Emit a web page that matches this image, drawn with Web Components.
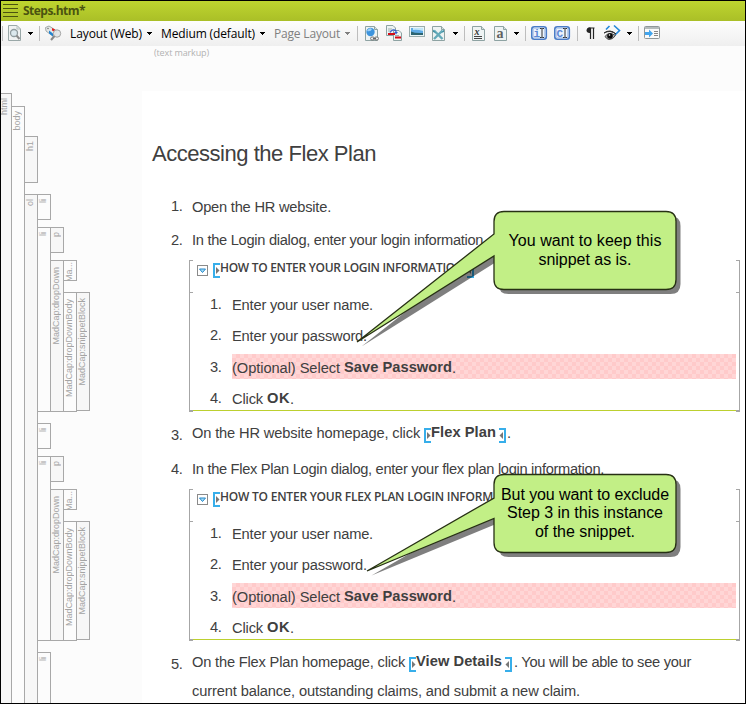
<!DOCTYPE html>
<html lang="en"><head><meta charset="utf-8"><title>Steps.htm</title>
<style>body{margin:0;width:746px;height:704px;overflow:hidden;font-family:"Liberation Sans",Arial,sans-serif;color:#404040}</style></head>
<body>
<editor-window>
  <title-bar slot="title"><fit-text w="62">Steps.htm*</fit-text></title-bar>
  <tool-bar slot="tools">
    <tb-sep style="--g:1px"></tb-sep>
    <tb-icon name="preview" w="14" style="--g:5px"></tb-icon><tb-caret style="--g:6px"></tb-caret>
    <tb-sep style="--g:6px"></tb-sep>
    <tb-icon name="tags" w="17" style="--g:5px"></tb-icon>
    <fit-text w="72" style="margin-left:8px">Layout (Web)</fit-text><tb-caret style="--g:5px"></tb-caret>
    <fit-text w="94" style="margin-left:9px">Medium (default)</fit-text><tb-caret style="--g:5px"></tb-caret>
    <fit-text w="66" style="margin-left:9px;color:#808080">Page Layout</fit-text><tb-caret style="--g:5px;color:#808080"></tb-caret>
    <tb-sep style="--g:7px"></tb-sep>
    <tb-icon name="link" w="15" style="--g:7px"></tb-icon>
    <tb-icon name="xref" w="17" style="--g:6px"></tb-icon>
    <tb-icon name="image" w="17" style="--g:6px"></tb-icon>
    <tb-icon name="media" w="15" style="--g:6px"></tb-icon><tb-caret style="--g:6px"></tb-caret>
    <tb-sep style="--g:6px"></tb-sep>
    <tb-icon name="varx" w="14" style="--g:7px"></tb-icon>
    <tb-icon name="vara" w="14" style="--g:8px"></tb-icon><tb-caret style="--g:6px"></tb-caret>
    <tb-sep style="--g:6px"></tb-sep>
    <tb-icon name="ii" w="17" style="--g:5px"></tb-icon>
    <tb-icon name="ci" w="17" style="--g:6px"></tb-icon>
    <tb-sep style="--g:6px"></tb-sep>
    <tb-icon name="para" w="10" style="--g:8px"></tb-icon>
    <tb-icon name="eye" w="18" style="--g:8px"></tb-icon><tb-caret style="--g:5px"></tb-caret>
    <tb-sep style="--g:6px"></tb-sep>
    <tb-icon name="panel" w="17" style="--g:5px"></tb-icon>
  </tool-bar>

  <md-tag slot="tags" label="html" h="620" style="--t:47px;margin-left:-3px">
    <md-tag label="body" h="610" style="--t:13px" alt>
      <md-tag label="h1" h="47" style="--t:30px"></md-tag>
      <md-tag label="ol" h="530" style="--t:11px">
        <md-tag label="li" h="26" alt></md-tag>
        <md-tag label="li" h="185" style="--t:7px" alt>
          <md-tag label="p" h="26"></md-tag>
          <md-tag label="MadCap:dropDown" h="152" style="--t:7px;--p:6px">
            <md-tag label="Ma..." h="21" style="--t:0px;--p:1px" alt></md-tag>
            <md-tag label="MadCap:dropDownBody" h="120" style="--t:11px;--p:6px" alt><md-tag label="MadCap:snippetBlock" h="119" style="--t:0px;--p:5px"></md-tag></md-tag>
          </md-tag>
        </md-tag>
        <md-tag label="li" h="26" style="--t:11px" alt></md-tag>
        <md-tag label="li" h="185" style="--t:7px" alt>
          <md-tag label="p" h="26"></md-tag>
          <md-tag label="MadCap:dropDown" h="152" style="--t:7px;--p:6px">
            <md-tag label="Ma..." h="21" style="--t:0px;--p:1px" alt></md-tag>
            <md-tag label="MadCap:dropDownBody" h="120" style="--t:11px;--p:6px" alt><md-tag label="MadCap:snippetBlock" h="119" style="--t:0px;--p:5px"></md-tag></md-tag>
          </md-tag>
        </md-tag>
        <md-tag label="li" h="90" style="--t:11px" alt></md-tag>
      </md-tag>
    </md-tag>
  </md-tag>

  <fit-text slot="markup" w="55">(text markup)</fit-text>
  <topic-page slot="page">
    <fit-text slot="heading" w="224">Accessing the Flex Plan</fit-text>
    <topic-step num="1." style="--t:28px;--n:-1px"><fit-text w="139">Open the HR website.</fit-text></topic-step>
    <topic-step num="2." style="--t:13px"><fit-text w="295">In the Login dialog, enter your login information.</fit-text></topic-step>
    <drop-down><fit-text slot="head" w="244">HOW TO ENTER YOUR LOGIN INFORMATION</fit-text></drop-down>
    <topic-step num="3." style="--t:11px;--n:2px"><fit-text w="232">On the HR website homepage, click </fit-text><snip-mark></snip-mark><fit-text w="65" class="b">Flex Plan</fit-text><snip-mark end></snip-mark><fit-text w="4" style="margin-left:1px">.</fit-text></topic-step>
    <topic-step num="4." style="--t:16px"><fit-text w="412">In the Flex Plan Login dialog, enter your flex plan login information.</fit-text></topic-step>
    <drop-down short><fit-text slot="head" w="273">HOW TO ENTER YOUR FLEX PLAN LOGIN INFORM</fit-text></drop-down>
    <topic-step num="5." style="--t:11px;--n:2px"><fit-text w="217">On the Flex Plan homepage, click </fit-text><snip-mark></snip-mark><fit-text w="86" class="b">View Details</fit-text><snip-mark end></snip-mark><fit-text w="177" style="margin-left:2px">. You will be able to see your</fit-text></topic-step>
    <topic-step num="" style="--t:9px"><fit-text w="388">current balance, outstanding claims, and submit a new claim.</fit-text></topic-step>
  </topic-page>

  <call-out slot="over" top="211" jy1="23" jy2="45" tx="-137" ty="131"><fit-text w="153">You want to keep this</fit-text><fit-text w="93">snippet as is.</fit-text></call-out>
  <call-out slot="over" top="474" jy1="24" jy2="44.500" tx="-127" ty="97"><fit-text w="168">But you want to exclude</fit-text><fit-text w="156">Step 3 in this instance</fit-text><fit-text w="100">of the snippet.</fit-text></call-out>
</editor-window>

<script>
const def = (name, html, init) => customElements.define(name, class extends HTMLElement {
  connectedCallback() {
    if (this.shadowRoot) return;
    this.attachShadow({mode: 'open'}).innerHTML = typeof html === 'function' ? html(this) : html;
    if (init) init(this);
  }
});
const at = (e, n) => e.getAttribute(n) || '';

def('editor-window', `<style>
:host{display:grid;grid-template-rows:20px 25px 1fr;box-sizing:border-box;width:746px;height:704px;border:1px solid #000;background:#fcfcfc;overflow:hidden;position:relative}
.main{display:grid;grid-template-columns:141px 1fr;overflow:hidden;min-height:0}
.tags{overflow:hidden;min-height:0}
.col{display:flex;flex-direction:column;min-height:0;overflow:hidden}
.mk{height:45px;padding-left:12px;flex:none;font:9px/14px "Open Sans",sans-serif;color:#b2b2b2}
.page{flex:1;background:#fff;min-height:0;overflow:hidden}
</style><slot name="title"></slot><slot name="tools"></slot>
<div class="main"><div class="tags"><slot name="tags"></slot></div><div class="col"><div class="mk"><slot name="markup"></slot></div><div class="page"><slot name="page"></slot></div></div></div><slot name="over"></slot>`);

def('title-bar', `<style>:host{display:flex;align-items:center;background:linear-gradient(#bed52f,#aabf27);font:bold 12px/20px "Open Sans",sans-serif;color:#4a5310}
svg{margin:0 5px 0 2px}</style><svg width="15" height="20"><path d="M0 3.500H15M0 7.500H15M0 11.500H15M0 15.500H15" stroke="#4a5310"/></svg><slot></slot>`);

def('tool-bar', `<style>:host{display:flex;align-items:center;background:linear-gradient(#fdfdfd,#efefef);font:12px/24px "Open Sans",sans-serif;color:#000}</style><slot></slot>`);
def('tb-sep', `<style>:host{display:block;flex:none;width:1px;height:15px;background:#bdbdbd;margin-left:var(--g)}</style>`);
def('tb-caret', `<style>:host{display:block;flex:none;height:25px;margin-left:var(--g)}</style><svg width="5" height="25" shape-rendering="crispEdges"><path d="M0 11H5V12H4V13H3V14H2V13H1V12H0Z" fill="currentColor"/></svg>`);

const doc = '<path d="M.5 1.500H9.500L12.500 4.500V15.500H.5Z" fill="#eef3f3" stroke="#8ea3a3"/><path d="M9.500 1.500V4.500H12.500" fill="#d5dfdf" stroke="#8ea3a3"/>';
const box = t => `<rect x=".8" y="1.800" width="14.500" height="12.500" rx="2.500" fill="#fff" stroke="#4a7cc7" stroke-width="1.600"/><rect x="2.500" y="3.500" width="11" height="9" fill="#edf4fc" stroke="#b9d0f0"/><text x="2.600" y="12" font-family="Liberation Mono" font-weight="bold" font-size="11" fill="#5c88d4">${t}</text><path d="M9 3.500H10.500L11 4L11.500 3.500H13M11 4V12M9 12.500H10.500L11 12L11.500 12.500H13" fill="none" stroke="#333"/>`;
const icons = {
  preview: '<path d="M.5 .5H9L12.500 4V15.500H.5Z" fill="#f0f2f2" stroke="#9aa8a8"/><path d="M9 .5V4H12.500" fill="none" stroke="#b5c0c0"/><circle cx="6" cy="8" r="3.500" fill="#dce9ee" stroke="#909c9f" stroke-width="1.300"/><path d="M8.500 10.500L11.500 14" stroke="#8b8b8b" stroke-width="2"/>',
  tags: '<path d="M.5 2.500L4 1L12 6L9 12L1 6Z" fill="#e4e8e8" stroke="#a2a9a9"/><circle cx="3" cy="3.500" r=".8" fill="#777"/><path d="M4 5.500L8 8.500V11.500L4 8.500Z" fill="#2583cf"/><path d="M7 3L10 4.500V7L7 5.500Z" fill="#e62020"/><circle cx="12" cy="8.500" r="3.700" fill="#e1e6e8" fill-opacity=".9" stroke="#a2a2a2"/><path d="M9.500 11L6 15" stroke="#898989" stroke-width="2"/>',
  link: doc + '<circle cx="5.500" cy="7" r="4.200" fill="#3d94dd"/><path d="M2 6Q4 2 7 4Q6 7 2 6Z" fill="#9fd0f6"/><g fill="#eee" stroke="#777"><rect x="5.500" y="12" width="4" height="3" rx="1.500"/><rect x="9.500" y="12" width="4" height="3" rx="1.500"/></g><path d="M8 13.500H11" stroke="#666"/>',
  xref: '<path d="M.5 .5H7L9.500 3V10.500H.5Z" fill="#edf3f3" stroke="#8ea3a3"/><path d="M7.500 5.500H13L15.500 8V15.500H7.500Z" fill="#edf3f3" stroke="#8ea3a3"/><path d="M2 4H6M2 6H5M9 10.500H13" stroke="#9daeae"/><path d="M4 7.500Q7 3 10 6V8" fill="none" stroke="#355dcb" stroke-width="1.200"/><path d="M8 7H12L10 9.500Z" fill="#355dcb"/><path d="M2 9H9M9 12.500H15" stroke="#d40d18" stroke-width="2"/>',
  image: '<rect x=".5" y="1.500" width="15" height="10" fill="#eaf5f7" stroke="#9aacac"/><rect x="2" y="3" width="12" height="7" fill="#5eaae5"/><path d="M4 3H14V6Q8 4 4 5Z" fill="#c1e6f9"/><path d="M2 6.500Q6 8.500 14 8V10H2Z" fill="#2c6471"/>',
  media: doc + '<path d="M2 5.500L10.500 14M10.500 5.500L2 14" stroke="#65aab9" stroke-width="2.400"/><path d="M1 4.500V7L4 8ZM12 4.500V7L9 8Z" fill="#3e90a5"/>',
  varx: doc + '<text x="2.500" y="9.500" font-family="Liberation Serif" font-weight="bold" font-style="italic" font-size="10" fill="#333">x</text><path d="M2 11.500H10M2 13.500H10" stroke="#444"/>',
  vara: doc + '<text x="2.500" y="13" font-family="Liberation Serif" font-weight="bold" font-size="14" fill="#606060">a</text>',
  ii: box('i'), ci: box('C'),
  para: '<path d="M7.500 3V14M4.500 3V14M2.500 3H8.500" stroke="#252525" fill="none" stroke-width="1.200"/><path d="M4.500 2.500H3.500Q.6 2.700 .6 5.300T3.500 8H4.500Z" fill="#252525"/>',
  eye: '<path d="M5.500 1L2 4.500M10 .5L15.500 5.500L11 10" fill="none" stroke="#2487d9" stroke-width="1.600"/><path d="M0 8Q6 3.500 12 9Q6 4.500 0 8Z" stroke="#333"/><path d="M1 11.500Q5 6 11.500 10.500Q9 14.500 5 14.500Q2.500 14 1 11.500Z" fill="#aaa" stroke="#4b4b4b"/><circle cx="6" cy="11" r="2.800" fill="#080808"/><circle cx="5.500" cy="10" r=".8" fill="#fff"/>',
  panel: '<rect x=".5" y="1.500" width="15" height="12" rx="1" fill="#fafafa" stroke="#8f9799"/><path d="M1 3H15" stroke="#b5bbbc" stroke-width="2"/><path d="M10 6.500H14M10 8.500H14M10 10.500H14" stroke="#888"/><path d="M1 7H5V4.500L9 8.500L5 12.500V10H1Z" fill="#42a5ed"/>'
};
def('tb-icon', e => `<style>:host{display:block;flex:none;height:17px;margin-left:var(--g)}svg{display:block;overflow:visible}</style><svg width="${at(e,'w')}" height="17">${icons[at(e,'name')]}</svg>`);

def('md-tag', e => `<style>:host{display:flex;margin-left:-1px;margin-top:var(--t,0px)}
.s{box-sizing:border-box;flex:none;width:14px;height:${at(e,'h')}px;border:1px solid #a8a8a8;background:${e.hasAttribute('alt')?'#fcfcfc':'#f7f7f7'};padding-top:var(--p,4px);overflow:hidden}
span{display:block;writing-mode:vertical-rl;transform:rotate(180deg);font-size:9px;line-height:10px;color:#a4a4a4;white-space:nowrap;width:10px;height:max-content}
.k{display:flex;flex-direction:column}
::slotted(md-tag:not([style])){--t:0px;--p:4px}
::slotted(md-tag){flex:none}
</style><div class="s"><span>${at(e,'label')}</span></div><div class="k"><slot></slot></div>`);

def('topic-page', `<style>:host{display:block;padding-top:48px;font-size:14.670px}.h{height:30px;padding-left:10px;font-size:22px;line-height:30px}</style><div class="h"><slot name="heading"></slot></div><slot></slot>`);
def('topic-step', e => `<style>:host{display:grid;grid-template-columns:21px 1fr;height:20px;margin-top:var(--t);padding-left:29px;line-height:20px;white-space:nowrap}
.n{padding-top:3px;margin-top:calc(var(--n,0px) - 3px);letter-spacing:-.4px}.c{display:flex}
::slotted(.b){font-weight:bold;margin-top:-1px}</style><div class="n">${at(e,'num')}</div><div class="c"><slot></slot></div>`);
def('snip-mark', e => `<style>:host{display:block;width:7px;height:15px;margin-top:5px;${e.hasAttribute('end')?'margin-left:3px':''}}svg{display:block${e.hasAttribute('end')?';transform:scaleX(-1)':''}}</style><svg width="7" height="15"><path d="M7 1H1V14H7" fill="none" stroke="#37aeea" stroke-width="2"/><path d="M3 4L6.500 7.500L3 11Z" fill="#777"/></svg>`);
def('inner-step', e => `<style>:host{display:grid;grid-template-columns:22px 504px;height:25px;margin-bottom:6px;line-height:20px;white-space:nowrap}
.n{padding-top:calc(2px + var(--d,0px));letter-spacing:-.4px}.c{display:flex;padding-top:calc(3px + var(--d,0px));box-sizing:border-box;height:25px}
:host([off]) .c{background:repeating-conic-gradient(#ffcaca 0 25%,#ffd6d6 0 50%) 0 0/8px 8px}
::slotted(b){margin-top:-1px}</style><div class="n">${at(e,'num')}</div><div class="c"><slot></slot></div>`);
def('drop-down', e => `<style>:host{display:grid;grid-template-columns:4px 1fr 4px;box-sizing:border-box;width:551px;height:152px;margin:10px 0 0 47px}
.l,.r{display:grid;grid-template-rows:32px 1fr}
.l i,.r i{border:0 solid #a6a6a6;border-top-width:1px}.l i{border-left-width:1px}.r i{border-right-width:1px}
.l i+i,.r i+i{border-bottom-width:2px}
.m{border-bottom:1px solid #bcd02f;height:150px}
.hd{display:flex;height:32px;padding-left:4px;font:600 12px/16px "Open Sans","Noto Sans",sans-serif}
.hd svg{margin:5px 5px 0 0;flex:none}snip-mark{margin-top:3px}
.li{padding-left:17px}
b{display:block}
</style><div class="l"><i></i><i></i></div><div class="m"><div class="hd"><svg width="11" height="11"><rect x=".5" y=".5" width="10" height="10" fill="#fff" stroke="#8a8a8a"/><path d="M2.500 4H8.500L5.500 7.500Z" fill="#a4ddf8" stroke="#2487c8"/></svg><snip-mark></snip-mark><slot name="head"></slot>${e.hasAttribute('short')?'':'<snip-mark end></snip-mark>'}</div>
<div class="li"><inner-step num="1."><fit-text w="141">Enter your user name.</fit-text></inner-step><inner-step num="2."><fit-text w="135">Enter your password.</fit-text></inner-step><inner-step num="3." off style="--d:1px"><fit-text w="112">(Optional) Select </fit-text><b><fit-text w="108">Save Password</fit-text></b><span>.</span></inner-step><inner-step num="4." style="--d:1px"><fit-text w="35">Click </fit-text><b><fit-text w="23">OK</fit-text></b><span>.</span></inner-step></div></div><div class="r"><i></i><i></i></div>`);

def('call-out', e => {
  const n = k => +at(e, k), X = 140;
  const d = `M${X+10} .5H${X+172}Q${X+182} .5 ${X+182} 10.500V68.500Q${X+182} 78.500 ${X+172} 78.500H${X+10}Q${X} 78.500 ${X} 68.500V${n('jy2')}L${X+n('tx')} ${n('ty')}L${X} ${n('jy1')}V10.500Q${X} .5 ${X+10} .5Z`;
  return `<style>:host{position:absolute;left:353px;top:${n('top')-1}px;width:328px;height:142px}
svg{position:absolute;inset:0;overflow:visible}
.t{position:relative;margin-left:140px;width:182px;height:79px;display:flex;flex-direction:column;align-items:center;justify-content:center;font-size:16px;line-height:18.500px;color:#000}</style>
<svg width="328" height="142"><path d="${d}" transform="translate(4.500 4.500)" fill="#000" fill-opacity=".5"/><path d="${d}" fill="#c2ef86" stroke="#273014" stroke-width="1.300"/></svg><div class="t"><slot></slot></div>`;
});

/* Spreads a run of text over a given advance width. */
def('fit-text', `<style>:host{display:block;flex:none;white-space:pre}span{display:inline-block}</style><span><slot></slot></span>`, e => {
  const s = e.shadowRoot.querySelector('span');
  const w = s.getBoundingClientRect().width;
  e.style.width = at(e,'w') + 'px';
  s.style.letterSpacing = (at(e,'w') - w) / e.textContent.length + 'px';
});
</script>
</body></html>
